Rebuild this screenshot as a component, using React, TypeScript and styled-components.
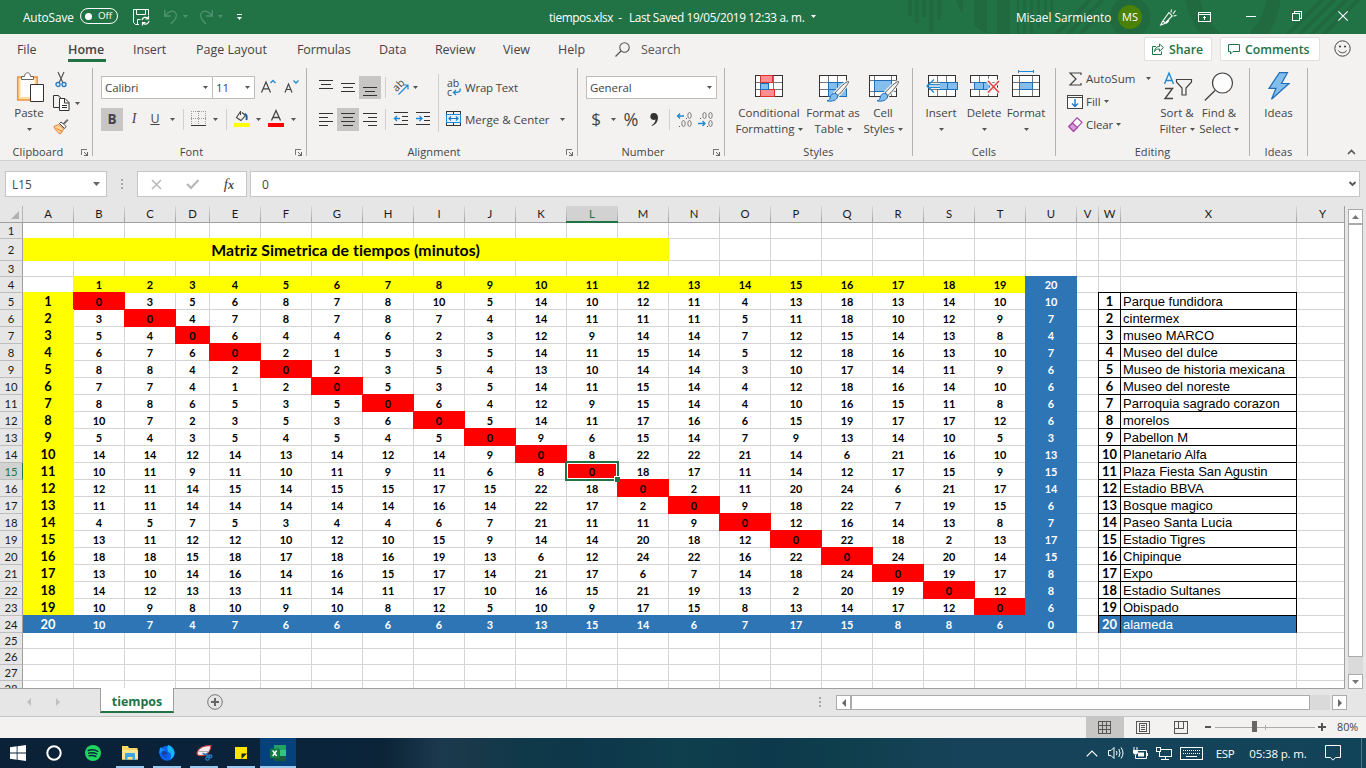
import React from "react";
import styled, { createGlobalStyle, css } from "styled-components";

const UI = `"Open Sans", "Noto Sans", sans-serif`;
const GREEN = "#217346";
const INK = "#444444";

const Global = createGlobalStyle`
  *, *::before, *::after { box-sizing: border-box; }
  html, body { margin: 0; padding: 0; }
  body { font-family: ${UI}; color: ${INK}; overflow: hidden; }
  svg { display: block; flex: none; overflow: visible; }
`;

const Window = styled.div`
  width: 1366px;
  height: 768px;
  display: flex;
  flex-direction: column;
  background: #e6e6e6;
  overflow: hidden;
`;

/* ---------- title bar ---------- */

const TitleBar = styled.header`
  position: relative;
  flex: none;
  height: 34px;
  display: grid;
  grid-template-columns: 549px 1fr 350px;
  background: ${GREEN};
  color: #fff;
  font-size: 11.8px;
  overflow: hidden;
`;
const TitleArt = styled.svg`
  position: absolute;
  right: 0;
  top: 0;
`;
const TitleSide = styled.div`
  position: relative;
  display: flex;
  align-items: center;
`;
const TitleItem = styled.span<{ $ml?: number; $w?: number; $ls?: number; $up?: number }>`
  margin-left: ${(p) => p.$ml ?? 0}px;
  width: ${(p) => (p.$w ? p.$w + "px" : "auto")};
  letter-spacing: ${(p) => p.$ls ?? 0}px;
  padding-bottom: ${(p) => p.$up ?? 1}px;
  white-space: nowrap;
  flex: none;
`;
const Toggle = styled.span`
  display: flex;
  align-items: center;
  flex: none;
  width: 38px;
  height: 16px;
  margin: 0 0 2px 7px;
  padding-left: 4px;
  border: 1px solid #fff;
  border-radius: 8px;
  font-size: 9.8px;
  line-height: 14px;
`;
const Knob = styled.i`
  width: 7px;
  height: 7px;
  margin-right: 6px;
  border-radius: 50%;
  background: #fff;
`;
const Avatar = styled.span`
  width: 24px;
  height: 24px;
  flex: none;
  margin-left: 11px;
  border-radius: 50%;
  background: #498205;
  font-size: 11px;
  line-height: 24px;
  text-align: center;
`;

/* ---------- tabs ---------- */

const TabStrip = styled.nav`
  flex: none;
  height: 33px;
  display: flex;
  padding-left: 17px;
  background: #f3f2f1;
  font-size: 12.5px;
`;
const Tab = styled.span<{ $w: number; $on?: boolean; $ls?: number }>`
  width: ${(p) => p.$w}px;
  flex: none;
  height: 28px;
  line-height: 31px;
  white-space: nowrap;
  letter-spacing: ${(p) => p.$ls ?? 0}px;
  ${(p) => p.$on && css`font-weight: 600;`}
`;
const TabInk = styled.span`
  display: inline-block;
  width: 38px;
  height: 28px;
  border-bottom: 3px solid ${GREEN};
`;
const SearchTab = styled(Tab)`
  padding-left: 11px;
  color: #555;
`;
const ShareButton = styled.button<{ $w: number; $ml: number }>`
  display: flex;
  align-items: center;
  width: ${(p) => p.$w}px;
  height: 24px;
  margin: 3px 0 0 ${(p) => p.$ml}px;
  padding: 0 0 0 7px;
  gap: 5px;
  border: 1px solid #e1dfdd;
  border-radius: 2px;
  background: #fff;
  color: ${GREEN};
  font: 600 12.3px ${UI};
  white-space: nowrap;
`;
const TabIcon = styled.span<{ $ml: number; $mt: number }>`
  margin: ${(p) => p.$mt}px 0 0 ${(p) => p.$ml}px;
`;

/* ---------- ribbon ---------- */

const Ribbon = styled.section`
  flex: none;
  height: 93px;
  display: flex;
  background: #f3f2f1;
  font-size: 11.5px;
`;
const Group = styled.div<{ $w: number }>`
  width: ${(p) => p.$w}px;
  height: 88px;
  margin-top: 1px;
  flex: none;
  display: flex;
  flex-direction: column;
  border-right: 1px solid #b5b3b1;
`;
const GroupBody = styled.div<{ $pl: number }>`
  display: flex;
  height: 76px;
  padding-left: ${(p) => p.$pl}px;
`;
const GroupFoot = styled.div`
  position: relative;
  height: 12px;
  line-height: 15px;
  font-size: 11px;
  letter-spacing: 0.1px;
  text-align: center;
  padding-right: 16px;
`;
const FootPlain = styled(GroupFoot)`
  padding-right: 0;
`;
const LauncherSlot = styled.span`
  position: absolute;
  right: 4px;
  top: 5px;
`;
const ToolRows = styled.div`
  display: flex;
  flex-direction: column;
  gap: 9px;
  padding-top: 8px;
`;
const ToolRow = styled.div`
  display: flex;
  align-items: center;
  height: 23px;
`;
const Tool = styled.span<{ $w: number; $on?: boolean }>`
  width: ${(p) => p.$w}px;
  height: 23px;
  flex: none;
  display: flex;
  align-items: center;
  justify-content: center;
  background: ${(p) => (p.$on ? "#c8c6c4" : "transparent")};
`;
const Rule = styled.i<{ $h?: number }>`
  width: 1px;
  height: ${(p) => p.$h ?? 21}px;
  margin: 0 4px;
  flex: none;
  background: #d2d0ce;
`;
const LongRule = styled(Rule)`
  margin-top: 6px;
`;
const Combo = styled.span<{ $w: number; $join?: boolean }>`
  width: ${(p) => p.$w}px;
  height: 23px;
  flex: none;
  display: flex;
  align-items: center;
  justify-content: space-between;
  padding: 0 4px 0 3px;
  margin-left: ${(p) => (p.$join ? -1 : 0)}px;
  border: 1px solid #c0bebc;
  background: #fff;
  font-size: 11.5px;
  letter-spacing: -0.1px;
`;
const Glyph = styled.b<{ $size: number; $weight?: number; $face?: string; $italic?: boolean }>`
  font: ${(p) => (p.$italic ? "italic " : "")}${(p) => p.$weight ?? 400} ${(p) => p.$size}px / 20px
    ${(p) => p.$face ?? UI};
  color: #444;
`;
const Lifted = styled.span`
  display: flex;
  padding-bottom: 2px;
`;
const ToolText = styled.span<{ $ml?: number; $w?: number; $ls?: number }>`
  margin-left: ${(p) => p.$ml ?? 0}px;
  width: ${(p) => (p.$w ? p.$w + "px" : "auto")};
  letter-spacing: ${(p) => p.$ls ?? 0}px;
  white-space: nowrap;
`;
const BigButton = styled.div<{ $w: number }>`
  width: ${(p) => p.$w}px;
  flex: none;
  display: flex;
  flex-direction: column;
  align-items: center;
`;
const BigIcon = styled.span<{ $top: number }>`
  height: 37px;
  padding-top: ${(p) => p.$top}px;
`;
const BigText = styled.span`
  display: flex;
  align-items: center;
  justify-content: center;
  gap: 3px;
  height: 16px;
  line-height: 16px;
  white-space: nowrap;
`;
const ClipTools = styled.div`
  display: flex;
  flex-direction: column;
  margin-left: 4px;
`;
const ClipTool = styled.div<{ $pl?: number }>`
  display: flex;
  align-items: center;
  height: 23.5px;
  gap: 5px;
  padding-left: ${(p) => p.$pl ?? 0}px;
`;
const EditTools = styled.div`
  width: 96px;
  flex: none;
  margin-top: -1px;
`;
const EditTool = styled.div`
  display: flex;
  align-items: center;
  height: 23px;
  gap: 3px;
`;
const EditIcon = styled.span`
  width: 16px;
  display: flex;
  justify-content: center;
`;
const Collapse = styled.div`
  flex: 1;
  display: flex;
  align-items: flex-end;
  justify-content: flex-end;
  padding: 0 10px 5px 0;
`;

/* ---------- formula bar ---------- */

const FormulaBar = styled.section`
  flex: none;
  height: 46px;
  display: flex;
  padding: 10px 6px 0 5px;
  border-top: 1px solid #d0d0d0;
  font-size: 12px;
`;
const Field = styled.div<{ $w?: number }>`
  ${(p) => (p.$w ? `width: ${p.$w}px; flex: none;` : "flex: 1;")}
  height: 26px;
  display: flex;
  align-items: center;
  border: 1px solid #c6c6c6;
  background: #fff;
`;
const NameField = styled(Field)`
  justify-content: space-between;
  padding: 0 5px 0 6px;
  font-size: 11.8px;
`;
const FormulaField = styled(Field)`
  justify-content: space-between;
  padding: 0 3px 0 11px;
  margin-left: 3px;
`;
const FxTools = styled(Field)`
  justify-content: space-between;
  padding: 0 12px 0 13px;
`;
const Grip = styled.span`
  width: 30px;
  display: flex;
  align-items: center;
  justify-content: center;
  height: 26px;
`;

/* ---------- sheet ---------- */

const Work = styled.main`
  flex: none;
  height: 483px;
  display: flex;
`;
const Sheet = styled.div`
  width: 1345px;
  height: 483px;
  overflow: hidden;
  background: #fff;
  border-right: 1px solid #9f9f9f;
  border-bottom: 1px solid #9f9f9f;
  color: #000;
`;
const HeadRow = styled.div`
  display: flex;
  height: 17px;
  background: #e6e6e6;
  border-bottom: 1px solid #9f9f9f;
`;
const ColHead = styled.div<{ $w: number; $on?: boolean }>`
  position: relative;
  width: ${(p) => p.$w}px;
  height: 16px;
  flex: none;
  font: 11.3px/16px Lato, sans-serif;
  text-align: center;
  border-right: 1px solid;
  border-image: linear-gradient(#dcdcdc, #9f9f9f) 1;
  border-width: 0 1px 0 0;
  color: ${(p) => (p.$on ? GREEN : "#1b1b1b")};
  background: ${(p) => (p.$on ? "#d2d2d2" : "transparent")};
  ${(p) =>
    p.$on &&
    css`
      &::after {
        content: "";
        position: absolute;
        left: -1px;
        right: -1px;
        bottom: -1px;
        height: 2px;
        background: ${GREEN};
      }
    `}
`;
const Corner = styled.div`
  width: 23px;
  height: 16px;
  flex: none;
  border-right: 1px solid #b4b4b4;
  padding: 5px 0 0 11px;
`;
const Row = styled.div<{ $h: number }>`
  display: flex;
  height: ${(p) => p.$h}px;
`;
const RowHead = styled.div<{ $h: number; $on?: boolean }>`
  width: 23px;
  height: ${(p) => p.$h}px;
  flex: none;
  font: 11.3px/${(p) => p.$h}px Lato, sans-serif;
  text-align: center;
  color: ${(p) => (p.$on ? GREEN : "#1b1b1b")};
  background: ${(p) => (p.$on ? "#d2d2d2" : "#e6e6e6")};
  border-right: 1px solid ${(p) => (p.$on ? GREEN : "#9f9f9f")};
  border-bottom: 1px solid #bdbdbd;
`;

type Tone = "plain" | "yellow" | "red" | "blue";
const toneBg: Record<Tone, string> = {
  plain: "transparent",
  yellow: "#ffff00",
  red: "#ff0000",
  blue: "#2e75b6",
};
const Cell = styled.div<{ $w: number; $tone?: Tone; $edge?: boolean; $sel?: boolean }>`
  position: relative;
  width: ${(p) => p.$w}px;
  flex: none;
  font: 700 10.9px/17px Lato, sans-serif;
  text-align: center;
  border: 0 solid #d4d4d4;
  border-width: 0 1px 1px 0;
  ${(p) => {
    const t = p.$tone ?? "plain";
    if (t === "plain") return "";
    const c = toneBg[t];
    return `background: ${c}; border-color: ${c}; color: ${t === "blue" ? "#fff" : "#000"};
      box-shadow: ${p.$edge ? "" : `-1px 0 0 ${c}, -1px -1px 0 ${c},`} 0 -1px 0 ${c};`;
  }}
  ${(p) => p.$sel && "z-index: 2; box-shadow: none;"}
`;
const HeadingCell = styled(Cell)`
  line-height: 15px;
`;
const LabelCell = styled(Cell)`
  font-size: 12.9px;
  line-height: 16px;
`;
const TitleCell = styled(Cell)`
  font-size: 15.8px;
  line-height: 21px;
  letter-spacing: 0.08px;
  font-variant-ligatures: none;
  white-space: nowrap;
`;
const KeyCell = styled(Cell)<{ $first?: boolean }>`
  font-size: 12.9px;
  line-height: 16px;
  border-right-color: #000;
  border-bottom-color: ${(p) => (p.$tone === "blue" ? "#2e75b6" : "#000")};
  box-shadow: -1px 0 0 #000 ${(p) => (p.$first ? ", 0 -1px 0 #000, -1px -1px 0 #000" : "")};
`;
const NameCell = styled(KeyCell)`
  font: 13px/18px "Liberation Sans", Arial, sans-serif;
  text-align: left;
  padding-left: 2px;
  white-space: nowrap;
`;
const Selection = styled.span`
  position: absolute;
  left: -2px;
  top: -2px;
  right: -2px;
  bottom: -2px;
  border: 2px solid ${GREEN};
  box-shadow: inset 0 0 0 1px #fff;
  &::after {
    content: "";
    position: absolute;
    right: -3px;
    bottom: -3px;
    width: 5px;
    height: 5px;
    background: ${GREEN};
    box-shadow: -1px -1px 0 #fff;
  }
`;

/* ---------- scrollbars ---------- */

const VScroll = styled.aside`
  width: 21px;
  padding: 3px 0 0 3px;
  display: flex;
  flex-direction: column;
`;
const ScrollBtn = styled.span`
  width: 15px;
  height: 15px;
  flex: none;
  display: flex;
  align-items: center;
  justify-content: center;
  border: 1px solid #ababab;
  background: #fff;
`;
const VThumb = styled.span`
  width: 15px;
  height: 433px;
  border: 1px solid #ababab;
  background: #fff;
`;
const VTrack = styled.span`
  width: 15px;
  height: 17px;
  background: #dadada;
`;

/* ---------- sheet tabs ---------- */

const SheetBar = styled.div`
  flex: none;
  height: 28px;
  display: flex;
  border-bottom: 1px solid #c6c6c6;
`;
const NavArrows = styled.span`
  width: 100px;
  display: flex;
  gap: 21px;
  padding: 9px 0 0 27px;
`;
const SheetTab = styled.span`
  position: relative;
  width: 74px;
  height: 25px;
  margin-top: -1px;
  border: 1px solid #9f9f9f;
  border-top: 0;
  border-bottom: 2px solid ${GREEN};
  background: #fff;
  color: ${GREEN};
  font-weight: 700;
  font-size: 12.4px;
  line-height: 27px;
  text-align: center;
`;
const AddSheet = styled.span`
  padding: 5px 0 0 33px;
  flex: 1;
`;
const HGrip = styled.span`
  width: 17px;
  padding: 7px 0 0 0;
`;
const HScroll = styled.span`
  display: flex;
  padding: 6px 19px 0 0;
`;
const HThumb = styled.span`
  width: 459px;
  height: 15px;
  border: 1px solid #ababab;
  background: #fff;
`;
const HTrack = styled.span`
  width: 20px;
  height: 15px;
  margin-right: 2px;
  background: #dadada;
`;

/* ---------- status bar ---------- */

const StatusBar = styled.footer`
  flex: none;
  height: 21px;
  display: flex;
  justify-content: flex-end;
  background: #f3f2f1;
  font-size: 10.8px;
`;
const ViewButton = styled.span<{ $on?: boolean }>`
  width: 38px;
  display: flex;
  align-items: center;
  justify-content: center;
  padding-right: 1px;
  background: ${(p) => (p.$on ? "#c8c6c4" : "transparent")};
`;
const Percent = styled.span`
  width: 29px;
  line-height: 19px;
`;
const ZoomBar = styled.span`
  padding: 4px 11px 0 4px;
`;

/* ---------- taskbar ---------- */

const TaskBar = styled.div`
  flex: none;
  height: 30px;
  display: flex;
  color: #fff;
  font-size: 11.5px;
  background: linear-gradient(
    90deg,
    #0a2137 0,
    #0a243b 330px,
    #0b2438 385px,
    #1c394d 440px,
    #1a394b 465px,
    #0f3848 525px,
    #0d384b 610px,
    #0f3f4d 680px,
    #0c394b 770px,
    #0f3f4d 850px,
    #17435a 960px,
    #124459 1366px
  );
`;
const TaskItem = styled.span<{ $w: number; $open?: boolean; $active?: boolean; $pl?: number }>`
  position: relative;
  width: ${(p) => p.$w}px;
  padding-left: ${(p) => p.$pl ?? 0}px;
  padding-right: ${(p) => (p.$open ? 1 : 0)}px;
  flex: none;
  display: flex;
  align-items: center;
  justify-content: center;
  background: ${(p) => (p.$active ? "#05417a" : "transparent")};
  ${(p) =>
    (p.$open || p.$active) &&
    css`
      &::after {
        content: "";
        position: absolute;
        bottom: 0;
        left: ${p.$active ? 0 : 4}px;
        right: ${p.$active ? 0 : 5}px;
        height: 2px;
        background: #99c9ef;
      }
    `}
`;
const Tray = styled.span`
  margin-left: auto;
  display: flex;
  align-items: center;
`;
const TrayItem = styled.span<{ $w: number; $ls?: number }>`
  width: ${(p) => p.$w}px;
  flex: none;
  display: flex;
  justify-content: center;
  letter-spacing: ${(p) => p.$ls ?? 0}px;
  white-space: nowrap;
`;
const ShowDesktop = styled.i`
  width: 5px;
  height: 30px;
  border-left: 1px solid #4f7484;
`;

/* ---------- icons ---------- */

const Svg = ({ w, h, children, crisp }: { w: number; h: number; children: React.ReactNode; crisp?: boolean }) => (
  <svg width={w} height={h} viewBox={`0 0 ${w} ${h}`} fill="none" shapeRendering={crisp ? "crispEdges" : undefined}>
    {children}
  </svg>
);
const Caret = ({ c = "#555" }: { c?: string }) => (
  <Svg w={5} h={3}><path d="M0 0h5L2.5 3z" fill={c} /></Svg>
);
const NavArrow = ({ d }: { d: string }) => (
  <Svg w={8} h={8}><path d={d} fill="#c0c0c0" /></Svg>
);
const LauncherIcon = () => (
  <LauncherSlot>
    <Svg w={7} h={7} crisp>
      <path d="M0.5 6V0.5H6" stroke="#777" />
      <path d="M3 3l3 3M6.5 2.5v4h-4" stroke="#666" />
    </Svg>
  </LauncherSlot>
);
const Lines = ({ rows, dy = 0 }: { rows: [number, number][]; dy?: number }) => (
  <Svg w={14} h={14} crisp>
    {rows.map(([x, w], i) => (
      <rect key={i} x={x} y={dy + i * 4} width={w} height={1} fill="#333" />
    ))}
  </Svg>
);
const TableGrid = () => (
  <>
    <rect x="0.5" y="0.5" width="27" height="21" fill="#fff" stroke="#333" />
    <path d="M1 7.5h26M1 14.5h26M9.5 1v20M18.5 1v20" stroke="#777" />
  </>
);
const Brush = () => (
  <g shapeRendering="auto">
    <path d="M29.5 6.5c1.2.8-7 11-10.5 14l-3-2.5C19 14 28 5.7 29.5 6.5z" fill="#f6f6f6" stroke="#f3f2f1" strokeWidth="3" />
    <path d="M29.5 6.5c1.2.8-7 11-10.5 14l-3-2.5C19 14 28 5.7 29.5 6.5z" fill="#f6f6f6" stroke="#555" />
    <path d="M15.5 18.5c2 0 3.5 1.5 3 3.5-.6 3-5 5-10.5 3.8 2.5-.3 3-2 3.5-4.3.4-1.800 2-3 4-3z" fill="#83beec" stroke="#1e6fb8" />
  </g>
);

const IconPaste = () => (
  <Svg w={24} h={30}>
    <path d="M.7 5h19.5v23H.7z" fill="#fcdca0" stroke="#ec9240" strokeWidth="1.5" />
    <path d="M3.5 7h14v18h-14z" fill="#fdfdfd" />
    <path d="M4.5 7.5v-3h3c0-5 6-5 6 0h3v3z" fill="#fff" stroke="#666" />
    <path d="M13.5 12.5h13v17h-13z" fill="#fff" stroke="#333" />
  </Svg>
);
const IconCut = () => (
  <Svg w={12} h={17}>
    <path d="M3 1l5 11M9 1L4 12" stroke="#555" strokeWidth="1.2" />
    <circle cx="3" cy="13.5" r="2" stroke="#2478c0" strokeWidth="1.3" />
    <circle cx="9" cy="13.5" r="2" stroke="#2478c0" strokeWidth="1.3" />
  </Svg>
);
const IconCopy = () => (
  <Svg w={17} h={17}>
    <path d="M6 12.5H.5V.5h5M5 .5l3 2.5" stroke="#333" />
    <path d="M6.5 3.5h5.5l4 4v8H6.5z" fill="#fff" stroke="#333" />
    <path d="M11.5 4v4H16M9 10.5h5M9 12.5h5" stroke="#333" />
  </Svg>
);
const IconPainter = () => (
  <Svg w={16} h={16}>
    <path d="M.8 7.5l5-2 5 4.5-3.5 5C5 14 2.5 11 .8 7.5z" fill="#fbd29a" stroke="#e8812e" />
    <path d="M3.5 9.500l6 3" stroke="#e8812e" />
    <path d="M6.5 4.5l5 5 1.5-2-2-2.2 4-4L13.8.8l-3.6 4L8 3z" fill="#fff" stroke="#444" />
  </Svg>
);
const IconGrow = ({ down }: { down?: boolean }) => (
  <Svg w={15} h={15}>
    <path d={down ? "M1 12.5L4.5 4l3.500 8.500M2.200 9.500h4.600" : "M.5 12.5L5 2l4.5 10.5M2 8.8h6"} stroke="#444" strokeWidth="1.2" />
    <path d={down ? "M9.5 .5l2.5 2.5 2.500-2.500" : "M9.5 3L12 .5 14.5 3"} stroke="#1e8ad6" strokeWidth="1.3" />
  </Svg>
);
const IconBorders = () => (
  <Svg w={15} h={15} crisp>
    <path d="M.5 0v14M14.5 0v14M7.5 0v14M0 .5h15M0 7.5h15" stroke="#999" strokeDasharray="1 1" />
    <path d="M0 14.5h15" stroke="#333" />
  </Svg>
);
const IconFillColor = () => (
  <Svg w={16} h={17}>
    <path d="M6.5 1.5L2.5 7.5 7 10.5l4.500-5L8 2.500M6.500 1v4" stroke="#444" strokeWidth="1.1" fill="none" />
    <path d="M10.5 4c2 .5 2.800 2 2 6" stroke="#1e5fa0" strokeWidth="2" />
    <rect y="13" width="16" height="4" fill="#ffff00" />
  </Svg>
);
const IconFontColor = () => (
  <Svg w={16} h={17}>
    <path d="M3.5 10.5L8 .5l4.500 10M5 7.500h6" stroke="#444" strokeWidth="1.3" />
    <rect y="13" width="16" height="4" fill="#ff0000" />
  </Svg>
);
const Small = styled.span<{ $rot?: boolean }>`
  display: block;
  height: 8px;
  font: 10.5px/8px ${UI};
  ${(p) => p.$rot && "transform: rotate(-45deg);"}
`;
const IconBox = styled.span`
  position: relative;
  width: 16px;
  height: 16px;
`;
const Over = styled.span<{ $x: number; $y: number }>`
  position: absolute;
  left: ${(p) => p.$x}px;
  top: ${(p) => p.$y}px;
`;
const IconOrient = () => (
  <IconBox>
    <Over $x={-1} $y={1}><Small $rot>ab</Small></Over>
    <Svg w={16} h={16}><path d="M5.5 14.5L15 5M10.5 5H15v4.5" stroke="#1e8ad6" strokeWidth="1.2" /></Svg>
  </IconBox>
);
const IconWrap = () => (
  <IconBox>
    <Over $x={1} $y={-1}><Small>ab</Small></Over>
    <Over $x={1} $y={8}><Small>c</Small></Over>
    <Svg w={16} h={16}><path d="M14 8.5c1 3.500-1.500 4-6.500 4M10 10l-2.500 2.500L10 15" stroke="#1e8ad6" strokeWidth="1.3" /></Svg>
  </IconBox>
);
const IconIndent = ({ inc }: { inc?: boolean }) => (
  <Svg w={15} h={13} crisp>
    <path d="M0 .5h14M8 4.5h6M8 8.5h6M0 12.5h14" stroke="#333" />
    <path shapeRendering="auto" d={inc ? "M0 6.5h6M3.5 4L6 6.5 3.5 9" : "M6 6.5H.5M3 4L.5 6.5 3 9"} stroke="#1e8ad6" strokeWidth="1.3" />
  </Svg>
);
const IconMerge = () => (
  <Svg w={15} h={15} crisp>
    <path d="M.5 .5h14v14H.5zM.5 3.5h14M.5 11.5h14M7.5 0v3M7.5 12v3" stroke="#333" />
    <path d="M.5 3.5h14v8H.5z" fill="#e4f1fb" stroke="#1e8ad6" />
    <path shapeRendering="auto" d="M3 7.5h9M5 5.5l-2 2 2 2M10 5.5l2 2-2 2" stroke="#1e7ac6" strokeWidth="1.2" />
  </Svg>
);
const IconDecimal = ({ dec }: { dec?: boolean }) => (
  <Svg w={16} h={15}>
    <path d={dec ? "M0 11.5h7M4.5 9L7 11.5 4.5 14" : "M7 4H.5M3 1.5L.5 4 3 6.5"} stroke="#1e8ad6" strokeWidth="1.3" />
    {(dec ? [[5, 3.5], [11, 3.5], [11, 11.5]] : [[11, 3.5], [5, 11.5], [11, 11.5]]).map(([x, y], i) => (
      <ellipse key={i} cx={x + 1.5} cy={y} rx="1.7" ry="3" stroke="#777" />
    ))}
    <rect x="2" y={dec ? 6 : 14} width="1" height="1" fill="#555" />
    <rect x="9" y={dec ? 14 : 6} width="1" height="1" fill="#555" />
  </Svg>
);
const IconCond = () => (
  <Svg w={28} h={22} crisp>
    <TableGrid />
    <path d="M5.5 .5h12v7h-12zM5.5 14.5h14v7h-14z" fill="#ff8f8f" stroke="#d8322f" />
    <path d="M5.5 8h8v6h-8z" fill="#83beec" stroke="#1e6fb8" />
  </Svg>
);
const IconTable = () => (
  <Svg w={28} h={26} crisp>
    <TableGrid />
    <path d="M9.5 7.5h18v14h-18zM9.5 14.5h18M18.5 7.5v14" fill="#83beec" stroke="#1e6fb8" />
    <Brush />
  </Svg>
);
const IconStyles = () => (
  <Svg w={28} h={26} crisp>
    <rect x="0.5" y="0.5" width="27" height="21" fill="#fff" stroke="#333" />
    <path d="M1 5.5h26M1 16.5h26M5.5 1v20M22.5 1v20" stroke="#777" />
    <path d="M5.5 5.5h17v11h-17z" fill="#83beec" stroke="#1e6fb8" />
    <Brush />
  </Svg>
);
const IconInsert = () => (
  <Svg w={30} h={22} crisp>
    <g transform="translate(2 0)"><TableGrid /></g>
    <path d="M12.5 7.5h19v7h-19zM21.5 7.5v7" fill="#83beec" stroke="#1e6fb8" />
    <path d="M3 11h11" stroke="#f3f2f1" strokeWidth="6" />
    <path shapeRendering="auto" d="M8 4.5L1 11l7 6.5M1.5 9.7H14M1.5 12.3H14" stroke="#1e8ad6" strokeWidth="1.3" />
  </Svg>
);
const IconDelete = () => (
  <Svg w={28} h={22} crisp>
    <TableGrid />
    <path d="M0 8h5v6H0z" fill="#f3f2f1" />
    <path d="M4.5 7.5h15v7h-15zM13.5 7.5v7" fill="#83beec" stroke="#1e6fb8" />
    <path shapeRendering="auto" d="M17 5l13 13M30 5L17 18" stroke="#f3f2f1" strokeWidth="4" />
    <path shapeRendering="auto" d="M18 6l11 11.5M29 6L18 17.5" stroke="#e8403c" strokeWidth="1.5" />
  </Svg>
);
const IconFormat = () => (
  <Svg w={28} h={22} crisp>
    <path d="M6.5 -5v3M21.5 -5v3M6 -3.5h15" stroke="#1e8ad6" />
    <rect x="0.5" y="0.5" width="27" height="21" fill="#fff" stroke="#333" />
    <path d="M1 7.5h26M1 14.5h26M7.5 1v20M20.5 1v20" stroke="#777" />
    <path d="M7.5 7.5h13v7h-13z" fill="#83beec" stroke="#1e6fb8" />
  </Svg>
);
const IconSum = () => (
  <Svg w={13} h={14}><path d="M12 3V1H1l6 6-6 6h11v-2" stroke="#444" strokeWidth="1.2" /></Svg>
);
const IconFill = () => (
  <Svg w={16} h={14} crisp>
    <path d="M.5 .5h15v13H.5zM.5 2.5h15" stroke="#444" fill="#fff" />
    <path shapeRendering="auto" d="M8 4v7M5 8.5L8 11.5l3-3" stroke="#1e7ac6" strokeWidth="1.4" />
  </Svg>
);
const IconClear = () => (
  <Svg w={15} h={15}>
    <path d="M9 .8l5 4.5-8.5 9L.8 9.5z" fill="#fff" stroke="#a349a4" strokeWidth="1.2" />
    <path d="M4.5 6l5 4.5-4 3.8L.8 9.5z" fill="#d59bd8" stroke="#a349a4" strokeWidth="1.2" />
  </Svg>
);
const IconSort = () => (
  <Svg w={29} h={28}>
    <path d="M1.5 12L6 1l4.5 11M3 8.5h6" stroke="#1e8ad6" strokeWidth="1.4" />
    <path d="M2 16.5h7.5L2 26.5h8" stroke="#444" strokeWidth="1.4" />
    <path d="M13.5 7.5h15v2.5l-5.5 6v7h-4v-7l-5.5-6z" stroke="#444" strokeWidth="1.2" />
  </Svg>
);
const IconFind = () => (
  <Svg w={30} h={30}>
    <circle cx="18.5" cy="11" r="10" fill="#fdfdfd" stroke="#444" strokeWidth="1.2" />
    <path d="M11 18.5L.8 28.5" stroke="#444" strokeWidth="1.3" />
  </Svg>
);
const IconIdeas = () => (
  <Svg w={22} h={28}>
    <path d="M11.5 .7h8l-6 10.8h7.5L3.5 27.3l4.5-11H1z" fill="#83beec" stroke="#1e6fb8" strokeWidth="1.2" />
  </Svg>
);

const TitleDecoration = () => (
  <TitleArt width="466" height="34" viewBox="900 0 466 34" fill="none">
    <g fill="#21693f">
      <path d="M908 0h4v16h-4zM915 0h4v23h-4zM922 0h4v17h-4zM929 0h4v32h-4zM937 0h4v20h-4zM956 0h7v14q-5-6-7-14zM974 0h13v33q-8-3-13-8zM997 0h13v34h-13z" />
      <path d="M1017 0h2v34h-2zM1023 0h3v34h-3zM1030 0h3v34h-3zM1037 0h3v28h-3zM1044 0h3v22h-3zM1050 0h3v14h-3z" />
    </g>
    <g stroke="#21693f">
      <circle cx="1130" cy="17" r="16" strokeWidth="9" />
      <path d="M1056 34l34-34M1068 34l34-34M1080 34l20-20" strokeWidth="4" />
      <path d="M1192 -4q4 28 24 42M1274 -4q-3 28-20 42" strokeWidth="14" />
      <path d="M1284 38l42-42M1296 38l42-42M1308 38l42-42M1320 38l42-42" strokeWidth="4" />
    </g>
  </TitleArt>
);

/* ---------- data ---------- */

const COLS: [string, number][] = [
  ["A", 51], ["B", 51], ["C", 51], ["D", 34], ["E", 51], ["F", 51], ["G", 51], ["H", 51], ["I", 51],
  ["J", 51], ["K", 51], ["L", 51], ["M", 51], ["N", 51], ["O", 51], ["P", 51], ["Q", 51], ["R", 51],
  ["S", 51], ["T", 51], ["U", 51], ["V", 22], ["W", 22], ["X", 176], ["Y", 52],
];
const TIMES = [
  [0, 3, 5, 6, 8, 7, 8, 10, 5, 14, 10, 12, 11, 4, 13, 18, 13, 14, 10, 10],
  [3, 0, 4, 7, 8, 7, 8, 7, 4, 14, 11, 11, 11, 5, 11, 18, 10, 12, 9, 7],
  [5, 4, 0, 6, 4, 4, 6, 2, 3, 12, 9, 14, 14, 7, 12, 15, 14, 13, 8, 4],
  [6, 7, 6, 0, 2, 1, 5, 3, 5, 14, 11, 15, 14, 5, 12, 18, 16, 13, 10, 7],
  [8, 8, 4, 2, 0, 2, 3, 5, 4, 13, 10, 14, 14, 3, 10, 17, 14, 11, 9, 6],
  [7, 7, 4, 1, 2, 0, 5, 3, 5, 14, 11, 15, 14, 4, 12, 18, 16, 14, 10, 6],
  [8, 8, 6, 5, 3, 5, 0, 6, 4, 12, 9, 15, 14, 4, 10, 16, 15, 11, 8, 6],
  [10, 7, 2, 3, 5, 3, 6, 0, 5, 14, 11, 17, 16, 6, 15, 19, 17, 17, 12, 6],
  [5, 4, 3, 5, 4, 5, 4, 5, 0, 9, 6, 15, 14, 7, 9, 13, 14, 10, 5, 3],
  [14, 14, 12, 14, 13, 14, 12, 14, 9, 0, 8, 22, 22, 21, 14, 6, 21, 16, 10, 13],
  [10, 11, 9, 11, 10, 11, 9, 11, 6, 8, 0, 18, 17, 11, 14, 12, 17, 15, 9, 15],
  [12, 11, 14, 15, 14, 15, 15, 17, 15, 22, 18, 0, 2, 11, 20, 24, 6, 21, 17, 14],
  [11, 11, 14, 14, 14, 14, 14, 16, 14, 22, 17, 2, 0, 9, 18, 22, 7, 19, 15, 6],
  [4, 5, 7, 5, 3, 4, 4, 6, 7, 21, 11, 11, 9, 0, 12, 16, 14, 13, 8, 7],
  [13, 11, 12, 12, 10, 12, 10, 15, 9, 14, 14, 20, 18, 12, 0, 22, 18, 2, 13, 17],
  [18, 18, 15, 18, 17, 18, 16, 19, 13, 6, 12, 24, 22, 16, 22, 0, 24, 20, 14, 15],
  [13, 10, 14, 16, 14, 16, 15, 17, 14, 21, 17, 6, 7, 14, 18, 24, 0, 19, 17, 8],
  [14, 12, 13, 13, 11, 14, 11, 17, 10, 16, 15, 21, 19, 13, 2, 20, 19, 0, 12, 8],
  [10, 9, 8, 10, 9, 10, 8, 12, 5, 10, 9, 17, 15, 8, 13, 14, 17, 12, 0, 6],
  [10, 7, 4, 7, 6, 6, 6, 6, 3, 13, 15, 14, 6, 7, 17, 15, 8, 8, 6, 0],
];
const PLACES = [
  "Parque fundidora", "cintermex", "museo MARCO", "Museo del dulce", "Museo de historia mexicana",
  "Museo del noreste", "Parroquia sagrado corazon", "morelos", "Pabellon M", "Planetario Alfa",
  "Plaza Fiesta San Agustin", "Estadio BBVA", "Bosque magico", "Paseo Santa Lucia", "Estadio Tigres",
  "Chipinque", "Expo", "Estadio Sultanes", "Obispado", "alameda",
];
const rowHeight = (n: number) => (n === 2 ? 22 : n >= 5 && n <= 24 ? 17 : 16);

function SheetRow({ n }: { n: number }) {
  const h = rowHeight(n);
  const w = (i: number) => COLS[i][1];
  let cells: React.ReactNode;
  if (n === 2) {
    cells = (
      <>
        <TitleCell $w={646} $tone="yellow" $edge>Matriz Simetrica de tiempos (minutos)</TitleCell>
        {COLS.slice(13).map(([c, cw]) => <Cell key={c} $w={cw} />)}
      </>
    );
  } else if (n === 4) {
    cells = COLS.map(([c, cw], i) => (
      <HeadingCell key={c} $w={cw} $tone={i >= 1 && i <= 19 ? "yellow" : i === 20 ? "blue" : "plain"}>
        {i >= 1 && i <= 20 ? i : ""}
      </HeadingCell>
    ));
  } else if (n >= 5 && n <= 24) {
    const r = n - 5;
    const last = r === 19;
    cells = (
      <>
        <LabelCell $w={w(0)} $tone={last ? "blue" : "yellow"} $edge>{r + 1}</LabelCell>
        {TIMES[r].map((v, c) => {
          const tone: Tone = last || c === 19 ? "blue" : c === r ? "red" : "plain";
          const sel = n === 15 && c === 10;
          return (
            <Cell key={c} $w={w(c + 1)} $tone={tone} $sel={sel}>
              {v}
              {sel && <Selection />}
            </Cell>
          );
        })}
        <Cell $w={w(21)} />
        <KeyCell $w={w(22)} $tone={last ? "blue" : "plain"} $first={r === 0}>{r + 1}</KeyCell>
        <NameCell $w={w(23)} $tone={last ? "blue" : "plain"} $first={r === 0}>{PLACES[r]}</NameCell>
        <Cell $w={w(24)} />
      </>
    );
  } else {
    cells = COLS.map(([c, cw]) => <Cell key={c} $w={cw} />);
  }
  return (
    <Row $h={h}>
      <RowHead $h={h} $on={n === 15}>{n}</RowHead>
      {cells}
    </Row>
  );
}

const Launchable = ({ children }: { children: string }) => (
  <GroupFoot>{children}<LauncherIcon /></GroupFoot>
);

type BigProps = { w: number; icon: React.ReactNode; a: string; b?: string; caret?: boolean; top?: number };
function Big({ w, icon, a, b, caret = true, top = 7 }: BigProps) {
  return (
    <BigButton $w={w}>
      <BigIcon $top={top}>{icon}</BigIcon>
      <BigText>{a}</BigText>
      <BigText>{b}{caret && <Caret />}</BigText>
    </BigButton>
  );
}

export default function App() {
  return (
    <Window>
      <Global />
      <TitleBar>
        <TitleDecoration />
        <TitleSide>
          <TitleItem $ml={23} $w={50} $ls={-0.1}>AutoSave</TitleItem>
          <Toggle><Knob />Off</Toggle>
          <TitleItem $ml={15} $up={0}>
            <Svg w={17} h={17}>
              <path d="M6 15.5H2.5L.5 13.5V.5h15v6M3.5 .5v5h9v-5M4.5 15.5v-5h3" stroke="#fff" />
              <path d="M9 11a3.5 3.5 0 0 1 6-1.5M15.5 7v3h-3M16 12a3.5 3.5 0 0 1-6 2M9.5 16.5v-3h3" stroke="#fff" strokeWidth="1.2" />
            </Svg>
          </TitleItem>
          <TitleItem $ml={14} $up={0}>
            <Svg w={14} h={16}><path d="M.7 1v6h6M.7 7C4 2 10 .5 12 4.5c2 3-1 6.5-5 10.5" stroke="#4f9370" strokeWidth="1.3" /></Svg>
          </TitleItem>
          <TitleItem $ml={5}><Caret c="#4f9370" /></TitleItem>
          <TitleItem $ml={11} $up={0}>
            <Svg w={14} h={16}><path d="M13.3 1v6h-6M13.3 7C10 2 4 .5 2 4.5c-2 3 1 6.5 5 10.5" stroke="#4f9370" strokeWidth="1.3" /></Svg>
          </TitleItem>
          <TitleItem $ml={5}><Caret c="#4f9370" /></TitleItem>
          <TitleItem $ml={14} $up={0}>
            <Svg w={5} h={6}><path d="M0 .5h5" stroke="#fff" /><path d="M0 3h5L2.5 6z" fill="#fff" /></Svg>
          </TitleItem>
        </TitleSide>
        <TitleSide>
          <TitleItem $ls={-0.38}>tiempos.xlsx</TitleItem>
          <TitleItem $ml={5}>-</TitleItem>
          <TitleItem $ml={7} $ls={-0.35}>Last Saved 19/05/2019 12:33 a. m.</TitleItem>
          <TitleItem $ml={7}><Caret c="#fff" /></TitleItem>
        </TitleSide>
        <TitleSide>
          <TitleItem $w={91} $up={0}>Misael Sarmiento</TitleItem>
          <Avatar>MS</Avatar>
          <TitleItem $ml={18} $up={0}>
            <Svg w={17} h={17}>
              <path d="M9 3.5L2.5 12.5 .7 16l4-1.5 7.5-7.5zM3 12l2.500 2M6 14.500l3-3" stroke="#fff" strokeWidth="1.1" />
              <path d="M11 3.5l.5-3M13 5l2.5-3.5M13.5 7l3-.5" stroke="#fff" strokeWidth="1.1" />
            </Svg>
          </TitleItem>
          <TitleItem $ml={21}>
            <Svg w={13} h={10} crisp>
              <path d="M.5 .5h12v9H.5zM.5 2.5h12" stroke="#fff" />
              <path d="M6.5 4v4M4.5 6.5l2-2 2 2" stroke="#fff" />
            </Svg>
          </TitleItem>
          <TitleItem $ml={35}><Svg w={10} h={1} crisp><rect width="10" height="1" fill="#fff" /></Svg></TitleItem>
          <TitleItem $ml={36} $up={2}>
            <Svg w={10} h={10} crisp><path d="M.5 2.5h7v7h-7zM2.5 2V.5h7v7H8" stroke="#fff" /></Svg>
          </TitleItem>
          <TitleItem $ml={36} $up={2}>
            <Svg w={10} h={10}><path d="M.3 .3l9.4 9.4M9.7 .3L.3 9.7" stroke="#fff" strokeWidth="1.1" /></Svg>
          </TitleItem>
        </TitleSide>
      </TitleBar>

      <TabStrip>
        <Tab $w={51} $ls={-0.1}>File</Tab>
        <Tab $w={65} $on><TabInk>Home</TabInk></Tab>
        <Tab $w={63} $ls={-0.1}>Insert</Tab>
        <Tab $w={101}>Page Layout</Tab>
        <Tab $w={82} $ls={-0.1}>Formulas</Tab>
        <Tab $w={56}>Data</Tab>
        <Tab $w={68} $ls={-0.1}>Review</Tab>
        <Tab $w={55} $ls={-0.1}>View</Tab>
        <Tab $w={57}>Help</Tab>
        <TabIcon $ml={0} $mt={8}>
          <Svg w={15} h={15}><circle cx="9.5" cy="5.5" r="4.7" stroke="#555" strokeWidth="1.1" /><path d="M6 9L.5 14.5" stroke="#555" strokeWidth="1.2" /></Svg>
        </TabIcon>
        <SearchTab $w={514}>Search</SearchTab>
        <ShareButton $w={68} $ml={0}>
          <Svg w={12} h={12}><path d="M4 3.5H.5v8h9v-3" stroke={GREEN} /><path d="M2.5 8.5c.5-3.5 2.5-5 5-5V1l4 3.7-4 3.500V6c-2.5-.2-4 .8-5 2.500z" stroke={GREEN} /></Svg>
          Share
        </ShareButton>
        <ShareButton $w={100} $ml={8}>
          <Svg w={12} h={11}><path d="M.5 .5h11v7H5L2.5 10V7.5h-2z" stroke={GREEN} /></Svg>
          Comments
        </ShareButton>
        <TabIcon $ml={14} $mt={6}>
          <Svg w={17} h={17}>
            <circle cx="8.5" cy="8.5" r="7.7" stroke="#444" />
            <circle cx="6" cy="6.5" r="1.1" fill="#444" /><circle cx="11" cy="6.5" r="1.1" fill="#444" />
            <path d="M4.5 10.5c1.5 3 6.5 3 8 0" stroke="#444" />
          </Svg>
        </TabIcon>
      </TabStrip>

      <Ribbon>
        <Group $w={93}>
          <GroupBody $pl={9}>
            <Big w={40} top={4} icon={<IconPaste />} a="Paste" />
            <ClipTools>
              <ClipTool $pl={2}><IconCut /></ClipTool>
              <ClipTool><IconCopy /><Caret /></ClipTool>
              <ClipTool><IconPainter /></ClipTool>
            </ClipTools>
          </GroupBody>
          <Launchable>Clipboard</Launchable>
        </Group>

        <Group $w={214}>
          <GroupBody $pl={8}>
            <ToolRows>
              <ToolRow>
                <Combo $w={112}>Calibri<Caret /></Combo>
                <Combo $w={43} $join>11<Caret /></Combo>
                <Tool $w={27}><IconGrow /></Tool>
                <Tool $w={19}><IconGrow down /></Tool>
              </ToolRow>
              <ToolRow>
                <Tool $w={22} $on><Lifted><Glyph $size={13.5} $weight={700}>B</Glyph></Lifted></Tool>
                <Tool $w={22}><Lifted><Glyph $size={14} $italic $face={`"Liberation Serif", serif`}>I</Glyph></Lifted></Tool>
                <Tool $w={20}><Lifted><Glyph $size={12.5}><u>U</u></Glyph></Lifted></Tool>
                <Tool $w={14}><Caret /></Tool>
                <Rule />
                <Tool $w={21}><Lifted><IconBorders /></Lifted></Tool>
                <Tool $w={13}><Caret /></Tool>
                <Rule />
                <Tool $w={21}><Lifted><IconFillColor /></Lifted></Tool>
                <Tool $w={13}><Caret /></Tool>
                <Tool $w={22}><Lifted><IconFontColor /></Lifted></Tool>
                <Tool $w={12}><Caret /></Tool>
              </ToolRow>
            </ToolRows>
          </GroupBody>
          <Launchable>Font</Launchable>
        </Group>

        <Group $w={271}>
          <GroupBody $pl={8}>
            <ToolRows>
              <ToolRow>
                <Tool $w={22}><Lines rows={[[0, 14], [2, 10], [0, 14]]} dy={-1} /></Tool>
                <Tool $w={22}><Lines rows={[[0, 14], [2, 10], [0, 14]]} dy={2} /></Tool>
                <Tool $w={22} $on><Lines rows={[[0, 14], [2, 10], [0, 14]]} dy={6} /></Tool>
                <Rule />
                <Tool $w={22}><IconOrient /></Tool>
                <Tool $w={7}><Caret /></Tool>
              </ToolRow>
              <ToolRow>
                <Tool $w={22}><Lines rows={[[0, 14], [0, 9], [0, 14], [0, 9]]} /></Tool>
                <Tool $w={22} $on><Lines rows={[[0, 14], [2, 10], [0, 14], [2, 10]]} /></Tool>
                <Tool $w={22}><Lines rows={[[0, 14], [5, 9], [0, 14], [5, 9]]} /></Tool>
                <Rule />
                <Tool $w={22}><Lifted><IconIndent /></Lifted></Tool>
                <Tool $w={22}><Lifted><IconIndent inc /></Lifted></Tool>
              </ToolRow>
            </ToolRows>
            <LongRule $h={58} />
            <ToolRows>
              <ToolRow><Tool $w={22}><IconWrap /></Tool><ToolText $ls={-0.2}>Wrap Text</ToolText></ToolRow>
              <ToolRow>
                <Tool $w={20}><Lifted><IconMerge /></Lifted></Tool>
                <ToolText $ml={2} $w={85}>Merge &amp; Center</ToolText>
                <Tool $w={24}><Caret /></Tool>
              </ToolRow>
            </ToolRows>
          </GroupBody>
          <Launchable>Alignment</Launchable>
        </Group>

        <Group $w={147}>
          <GroupBody $pl={7}>
            <ToolRows>
              <ToolRow><Tool $w={1} /><Combo $w={131}>General<Caret /></Combo></ToolRow>
              <ToolRow>
                <Tool $w={22}><Lifted><Glyph $size={17}>$</Glyph></Lifted></Tool>
                <Tool $w={12}><Caret /></Tool>
                <Tool $w={24}><Lifted><Glyph $size={18}>%</Glyph></Lifted></Tool>
                <Tool $w={22}>
                  <Svg w={9} h={13}><path d="M4 0a3.5 3.5 0 0 0-.3 7c.9 0 1.3-.2 1.8-.5C5.3 9 4 11 1.5 12.3l.5.7C6 11.5 8 8.5 8 4.5 8 2 6.3 0 4 0z" fill="#333" /></Svg>
                </Tool>
                <Rule />
                <Tool $w={21}><IconDecimal /></Tool>
                <Tool $w={22}><IconDecimal dec /></Tool>
              </ToolRow>
            </ToolRows>
          </GroupBody>
          <Launchable>Number</Launchable>
        </Group>

        <Group $w={188}>
          <GroupBody $pl={9}>
            <Big w={70} icon={<IconCond />} a="Conditional" b="Formatting" />
            <Big w={58} icon={<IconTable />} a="Format as" b="Table" />
            <Big w={42} icon={<IconStyles />} a="Cell" b="Styles" />
          </GroupBody>
          <FootPlain>Styles</FootPlain>
        </Group>

        <Group $w={143}>
          <GroupBody $pl={7}>
            <Big w={42} icon={<IconInsert />} a="Insert" />
            <Big w={44} icon={<IconDelete />} a="Delete" />
            <Big w={40} icon={<IconFormat />} a="Format" />
          </GroupBody>
          <FootPlain>Cells</FootPlain>
        </Group>

        <Group $w={194}>
          <GroupBody $pl={11}>
            <EditTools>
              <EditTool><EditIcon><IconSum /></EditIcon><ToolText $w={57}>AutoSum</ToolText><Caret /></EditTool>
              <EditTool><EditIcon><IconFill /></EditIcon><ToolText>Fill</ToolText><Caret /></EditTool>
              <EditTool><EditIcon><IconClear /></EditIcon><ToolText $ls={-0.1}>Clear</ToolText><Caret /></EditTool>
            </EditTools>
            <Big w={28} top={4} icon={<IconSort />} a="Sort &amp;" b="Filter" />
            <Big w={56} top={4} icon={<IconFind />} a="Find &amp;" b="Select" />
          </GroupBody>
          <FootPlain>Editing</FootPlain>
        </Group>

        <Group $w={58}>
          <GroupBody $pl={8}>
            <Big w={41} top={4} icon={<IconIdeas />} a="Ideas" caret={false} />
          </GroupBody>
          <FootPlain>Ideas</FootPlain>
        </Group>
        <Collapse>
          <Svg w={9} h={6}><path d="M1 5l3.5-3.5L8 5" stroke="#555" strokeWidth="1.6" /></Svg>
        </Collapse>
      </Ribbon>

      <FormulaBar>
        <NameField $w={102}>L15<Svg w={8} h={5}><path d="M0 0h7L3.5 4z" fill="#666" /></Svg></NameField>
        <Grip><Svg w={2} h={11} crisp><path d="M0 0h2v2H0zM0 4h2v2H0zM0 8h2v2H0z" fill="#a6a6a6" /></Svg></Grip>
        <FxTools $w={110}>
          <Svg w={11} h={11}><path d="M1 1l9 9M10 1l-9 9" stroke="#b8b8b8" strokeWidth="1.5" /></Svg>
          <Svg w={13} h={10}><path d="M1 5l4 4 7.5-8" stroke="#b8b8b8" strokeWidth="2.2" /></Svg>
          <Glyph $size={15} $italic $face={`"Liberation Serif", serif`}>f<Glyph $size={12} $italic $weight={700} $face={`"Liberation Serif", serif`}>x</Glyph></Glyph>
        </FxTools>
        <FormulaField>0<Svg w={7} h={6}><path d="M.5 1l3 3 3-3" stroke="#555" strokeWidth="1.8" /></Svg></FormulaField>
      </FormulaBar>

      <Work>
        <Sheet>
          <HeadRow>
            <Corner><Svg w={8} h={8}><path d="M8 0v8H0z" fill="#b1b1b1" /></Svg></Corner>
            {COLS.map(([c, w]) => <ColHead key={c} $w={w} $on={c === "L"}>{c}</ColHead>)}
          </HeadRow>
          {Array.from({ length: 28 }, (_, i) => <SheetRow key={i} n={i + 1} />)}
        </Sheet>
        <VScroll>
          <ScrollBtn><Svg w={7} h={4}><path d="M0 4l3.5-4L7 4z" fill="#777" /></Svg></ScrollBtn>
          <VThumb />
          <VTrack />
          <ScrollBtn><Svg w={7} h={4}><path d="M0 0h7L3.5 4z" fill="#777" /></Svg></ScrollBtn>
        </VScroll>
      </Work>

      <SheetBar>
        <NavArrows>
          <NavArrow d="M4 0v8L0 4z" />
          <NavArrow d="M0 0v8l4-4z" />
        </NavArrows>
        <SheetTab>tiempos</SheetTab>
        <AddSheet>
          <Svg w={16} h={16}><circle cx="8" cy="8" r="7.3" stroke="#777" /><path d="M8 4v8M4 8h8" stroke="#666" strokeWidth="2" /></Svg>
        </AddSheet>
        <HGrip><Svg w={2} h={12} crisp><path d="M0 1h2v2H0zM0 5h2v2H0zM0 9h2v2H0z" fill="#a6a6a6" /></Svg></HGrip>
        <HScroll>
          <ScrollBtn><Svg w={4} h={8}><path d="M4 0v8L0 4z" fill="#666" /></Svg></ScrollBtn>
          <HThumb />
          <HTrack />
          <ScrollBtn><Svg w={4} h={8}><path d="M0 0v8l4-4z" fill="#666" /></Svg></ScrollBtn>
        </HScroll>
      </SheetBar>

      <StatusBar>
        <ViewButton $on><Svg w={13} h={13} crisp><path d="M.5 .5h12v12H.5zM.5 4.5h12M.5 8.5h12M4.5 .5v12M8.5 .5v12" stroke="#555" /></Svg></ViewButton>
        <ViewButton><Svg w={14} h={13} crisp><path d="M.5 .5h13v12H.5zM3.5 2.5h7v8h-7zM5 4.5h4M5 6.5h4M5 8.5h4" stroke="#555" /></Svg></ViewButton>
        <ViewButton><Svg w={14} h={13} crisp><path d="M.5 .5h13v12H.5zM4.5 .5v7M9.5 .5v7M.5 7.5h9" stroke="#555" /></Svg></ViewButton>
        <ZoomBar>
          <Svg w={122} h={12} crisp>
            <path d="M1 5h6v2H1zM114 5h8v2h-8zM117 2h2v8h-2z" fill="#555" />
            <path d="M11 6.5h100M61.5 4v5" stroke="#ababab" />
            <rect x="48" y="0" width="5" height="11" fill="#666" />
          </Svg>
        </ZoomBar>
        <Percent>80%</Percent>
      </StatusBar>

      <TaskBar>
        <TaskItem $w={36}>
          <Svg w={16} h={16}><path d="M0 2.3l6.7-1v6.3H0zM7.5 1.2L16 0v7.6H7.5zM0 8.4h6.7v6.3L0 13.8zM7.5 8.4H16V16l-8.5-1.2z" fill="#fff" /></Svg>
        </TaskItem>
        <TaskItem $w={36}><Svg w={16} h={16}><circle cx="8" cy="8" r="6.7" stroke="#fff" strokeWidth="2" /></Svg></TaskItem>
        <TaskItem $w={40} $pl={2}>
          <Svg w={16} h={16}><circle cx="8" cy="8" r="8" fill="#1ed760" /><path d="M3.2 5.5c3-1 7-.7 9.6.8M3.7 8.2c2.7-.8 5.8-.5 8.2.8M4.2 10.8c2.2-.6 4.7-.3 6.7.7" stroke="#0a2438" strokeWidth="1.4" strokeLinecap="round" /></Svg>
        </TaskItem>
        <TaskItem $w={37} $open>
          <Svg w={16} h={14}><path d="M0 0h6l1 2h8.5v11.5H0z" fill="#ffd766" /><path d="M0 4h16v9.5H0z" fill="#ffe593" /><path d="M3 14V8q0-1 1-1h8q1 0 1 1v6h-2.5v-3h-5v3z" fill="#3aa5e8" /></Svg>
        </TaskItem>
        <TaskItem $w={37} $open>
          <Svg w={16} h={16}><circle cx="8" cy="8.3" r="7.5" fill="#0a62f0" /><path d="M9 0c4 1 6.5 4 6.5 8 0 3-2 5.5-4.5 6.5 2-3 1.5-6.5-1.5-7.5C8 5 8 2 9 0z" fill="#14b4ff" /><path d="M3 6l4 .5 2 2L6.5 10 4.5 9.5c1 2 3 2.5 5.5 2-2 1.8-5.5 1-6.5-1.5-.6-1.5-.7-2.5-.5-4z" fill="#1c3f9c" /><path d="M.5 9C0 6 .5 3.5 2 2l1.5 2L6 4z" fill="#1490ff" /></Svg>
        </TaskItem>
        <TaskItem $w={37} $open>
          <Svg w={17} h={16}><path d="M1 8C2 3.5 7 .5 15 .5c0 4-3 9.5-8 10C3 11 .5 10 1 8z" fill="#f6eeee" stroke="#c8383c" strokeWidth="1.2" /><path d="M3 6.5h10" stroke="#b9a9b0" /><path d="M6.5 8.5l8 2.5M11 8v5" stroke="#2b6fae" strokeWidth="1.4" /><circle cx="11.5" cy="13.5" r="1.7" stroke="#2b7fc6" strokeWidth="1.2" /><circle cx="14.5" cy="11.3" r="1.5" stroke="#2b7fc6" strokeWidth="1.2" /></Svg>
        </TaskItem>
        <TaskItem $w={37} $open>
          <Svg w={12} h={12}><path d="M0 0h12v12H0z" fill="#ffe600" /><path d="M6.5 6.5H12L6.5 12z" fill="#222" /></Svg>
        </TaskItem>
        <TaskItem $w={36} $active>
          <Svg w={16} h={16}><path d="M4 0h12v16H4z" fill="#21a366" /><path d="M4 5h6v6H4z" fill="#107c41" /><path d="M4 11h12v5H4z" fill="#185c37" /><path d="M10 5h6v6h-6z" fill="#33c481" /><path d="M0 3.5h9.5v9.5H0z" fill="#107c41" /><path d="M2.7 5.5l4 5.5M6.7 5.5l-4 5.5" stroke="#fff" strokeWidth="1.4" /></Svg>
        </TaskItem>
        <Tray>
          <TrayItem $w={24}><Svg w={12} h={7}><path d="M.7 6.3L6 1l5.3 5.3" stroke="#fff" strokeWidth="1.2" /></Svg></TrayItem>
          <TrayItem $w={24}>
            <Svg w={17} h={14}><path d="M.5 4.5h2.5l3-3v11l-3-3H.5z" stroke="#fff" /><path d="M8.5 5q1 2 0 4M10.8 3q2.5 4 0 8M13 1.5q4 5.5 0 11" stroke="#fff" /></Svg>
          </TrayItem>
          <TrayItem $w={24}>
            <Svg w={16} h={13}><path d="M6 3.5h8.5v8H3.5V8" stroke="#fff" /><path d="M6 5.5h6v4H6z" fill="#fff" /><path d="M15 6h1v3h-1zM1 3h5v3L4.5 7.5h-2L1 6z" fill="#fff" /><path d="M2 0v3M5 0v3" stroke="#fff" /></Svg>
          </TrayItem>
          <TrayItem $w={24}>
            <Svg w={16} h={13} crisp><path d="M5 2.5h10.5v7H3.5V5M9.5 10v3M5 12.5h8M.5 .5h4v4h-4z" stroke="#fff" /></Svg>
          </TrayItem>
          <TrayItem $w={31}>
            <Svg w={23} h={13} crisp><path d="M.5 .5h22v12H.5z" stroke="#fff" /><path d="M3 3.5h17M3 6.5h17" stroke="#fff" strokeDasharray="1 1" /><path d="M6 9.5h11" stroke="#fff" /></Svg>
          </TrayItem>
          <TrayItem $w={36} $ls={-0.4}>ESP</TrayItem>
          <TrayItem $w={70} $ls={-0.15}>05:38 p. m.</TrayItem>
          <TrayItem $w={40}><Svg w={16} h={16}><path d="M.5 .5h15v12h-5L8 15.2 5.5 12.5h-5z" stroke="#fff" /></Svg></TrayItem>
          <TrayItem $w={8} />
          <ShowDesktop />
        </Tray>
      </TaskBar>
    </Window>
  );
}
